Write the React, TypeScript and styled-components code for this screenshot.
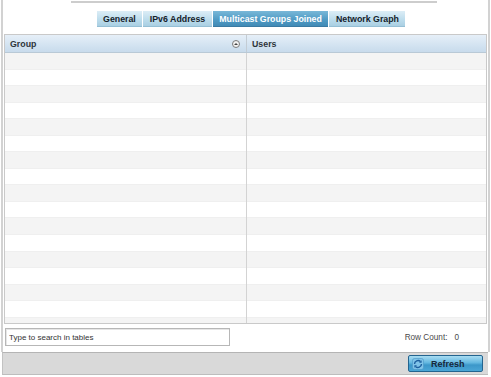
import React from "react";
import styled, { createGlobalStyle } from "styled-components";

const Global = createGlobalStyle`
  html, body { margin: 0; padding: 0; background: #ffffff; }
  body { font-family: "Liberation Sans", Arial, sans-serif; }
`;

const Page = styled.div`
  width: 491px;
  height: 377px;
  background: #ffffff;
  overflow: hidden;
  font-family: "Liberation Sans", Arial, sans-serif;
`;

const Panel = styled.div`
  box-sizing: border-box;
  margin-left: 1px;
  width: 489px;
  height: 352px;
  border-left: 2px solid #d2d2d2;
  border-right: 2px solid #d2d2d2;
  padding: 0 1px;
  display: flex;
  flex-direction: column;
`;

const TabArea = styled.div`
  margin: 1px 0 0 67px;
  width: 360px;
  border-top: 2px solid #cdcdcd;
  display: flex;
  justify-content: center;
  padding-top: 8px;
  padding-right: 6px;
`;

const TabRow = styled.div`
  display: flex;
  gap: 1px;
`;

const Tab = styled.div<{ $active?: boolean }>`
  height: 16px;
  line-height: 16px;
  padding: 0 6.5px;
  font-size: 8.8px;
  font-weight: bold;
  white-space: nowrap;
  color: ${(p) => (p.$active ? "#ffffff" : "#15222b")};
  background: ${(p) =>
    p.$active
      ? "linear-gradient(#79b8d8 0%, #4f9ac4 55%, #3f88b4 100%)"
      : "linear-gradient(#dcedf6 0%, #bcdcec 55%, #a7cde1 100%)"};
  box-shadow: inset 0 -1px 0 ${(p) => (p.$active ? "#3a7aa3" : "#95bfd5")};
`;

const Table = styled.div`
  margin-top: 7px;
  border: 1px solid #c9c9c9;
  display: flex;
  flex-direction: column;
`;

const HeaderRow = styled.div`
  display: grid;
  grid-template-columns: 241px 1fr;
  height: 17px;
  background: linear-gradient(#e6eff8 0%, #d3e3f1 60%, #c8dbec 100%);
  border-bottom: 1px solid #b9c9d6;
`;

const HeaderCell = styled.div<{ $divider?: boolean }>`
  display: flex;
  align-items: center;
  padding-left: 5px;
  font-size: 8.8px;
  font-weight: bold;
  color: #2e353b;
  border-left: ${(p) => (p.$divider ? "1px solid #c3ccd4" : "none")};
  position: relative;
`;

const SortIcon = styled.span`
  position: absolute;
  right: 6px;
  top: 5px;
  width: 8px;
  height: 8px;
  border-radius: 50%;
  border: 1px solid #7c7c7c;
  background: #f2f2f2;
  box-sizing: border-box;
  display: flex;
  align-items: center;
  justify-content: center;
  &::after {
    content: "";
    width: 0;
    height: 0;
    border-left: 2px solid transparent;
    border-right: 2px solid transparent;
    border-bottom: 2.5px solid #444;
  }
`;

const Body = styled.div`
  height: 270px;
  overflow: hidden;
  display: flex;
  flex-direction: column;
`;

const Row = styled.div<{ $odd: boolean }>`
  flex: 0 0 16.55px;
  display: grid;
  grid-template-columns: 241px 1fr;
  background: ${(p) => (p.$odd ? "#ffffff" : "#f4f4f4")};
  box-shadow: inset 0 -1px 0 #efefef;
`;

const Cell = styled.div<{ $divider?: boolean }>`
  border-left: ${(p) => (p.$divider ? "1px solid #d3d3d3" : "none")};
`;

const SearchRow = styled.div`
  margin-top: 4px;
  display: flex;
  align-items: center;
`;

const SearchBox = styled.input`
  box-sizing: border-box;
  margin-left: 1px;
  width: 225px;
  height: 18px;
  border: 1px solid #b7b7b7;
  box-shadow: inset 1px 1px 0 #e6e6e6;
  padding: 0 3px;
  font-family: "Liberation Sans", Arial, sans-serif;
  font-size: 8px;
  color: #333;
  outline: none;
  &::placeholder { color: #333; }
`;

const RowCount = styled.div`
  margin-left: auto;
  margin-right: 28px;
  display: flex;
  gap: 7px;
  font-size: 8.2px;
  color: #4a4a4a;
  margin-top: 1px;
`;

const Footer = styled.div`
  box-sizing: border-box;
  margin-left: 2px;
  width: 486px;
  height: 23px;
  background: #d9d9d9;
  border-top: 1px solid #b4b4b4;
  border-bottom: 1px solid #bdbdbd;
  border-left: 1px solid #c2c2c2;
  display: flex;
  justify-content: flex-end;
  align-items: flex-start;
  padding: 2px 5px 0 0;
`;

const RefreshButton = styled.button`
  box-sizing: border-box;
  width: 75px;
  height: 17px;
  border: 1px solid #23648f;
  border-radius: 2px;
  background: linear-gradient(#a8dcf2 0%, #63b7e0 45%, #3c97c9 60%, #4aa6d6 100%);
  display: flex;
  align-items: center;
  padding: 0 0 0 3px;
  gap: 7px;
  font-family: "Liberation Sans", Arial, sans-serif;
  font-size: 9px;
  font-weight: bold;
  color: #17283a;
  cursor: pointer;
`;

const RefreshIcon = () => (
  <svg width="12" height="12" viewBox="0 0 12 12">
    <rect x="0.5" y="0.5" width="11" height="11" rx="2" fill="#7fc3e8" stroke="#4c95c4" strokeWidth="0.6" />
    <path d="M2.5 6a3.5 3.5 0 0 1 6-2.4" fill="none" stroke="#1d5f9e" strokeWidth="1.4" />
    <path d="M9.6 2.2v2.6H7z" fill="#1d5f9e" />
    <path d="M9.5 6a3.5 3.5 0 0 1-6 2.4" fill="none" stroke="#1d5f9e" strokeWidth="1.4" />
    <path d="M2.4 9.8V7.2H5z" fill="#1d5f9e" />
  </svg>
);

const tabs = ["General", "IPv6 Address", "Multicast Groups Joined", "Network Graph"];

export default function App() {
  const rows = Array.from({ length: 17 }, (_, i) => i);
  return (
    <Page>
      <Global />
      <Panel>
        <TabArea>
          <TabRow>
            {tabs.map((t) => (
              <Tab key={t} $active={t === "Multicast Groups Joined"}>
                {t}
              </Tab>
            ))}
          </TabRow>
        </TabArea>
        <Table>
          <HeaderRow>
            <HeaderCell>
              Group
              <SortIcon />
            </HeaderCell>
            <HeaderCell $divider>Users</HeaderCell>
          </HeaderRow>
          <Body>
            {rows.map((i) => (
              <Row key={i} $odd={i % 2 === 1}>
                <Cell />
                <Cell $divider />
              </Row>
            ))}
          </Body>
        </Table>
        <SearchRow>
          <SearchBox placeholder="Type to search in tables" />
          <RowCount>
            <span>Row Count:</span>
            <span>0</span>
          </RowCount>
        </SearchRow>
      </Panel>
      <Footer>
        <RefreshButton>
          <RefreshIcon />
          Refresh
        </RefreshButton>
      </Footer>
    </Page>
  );
}
